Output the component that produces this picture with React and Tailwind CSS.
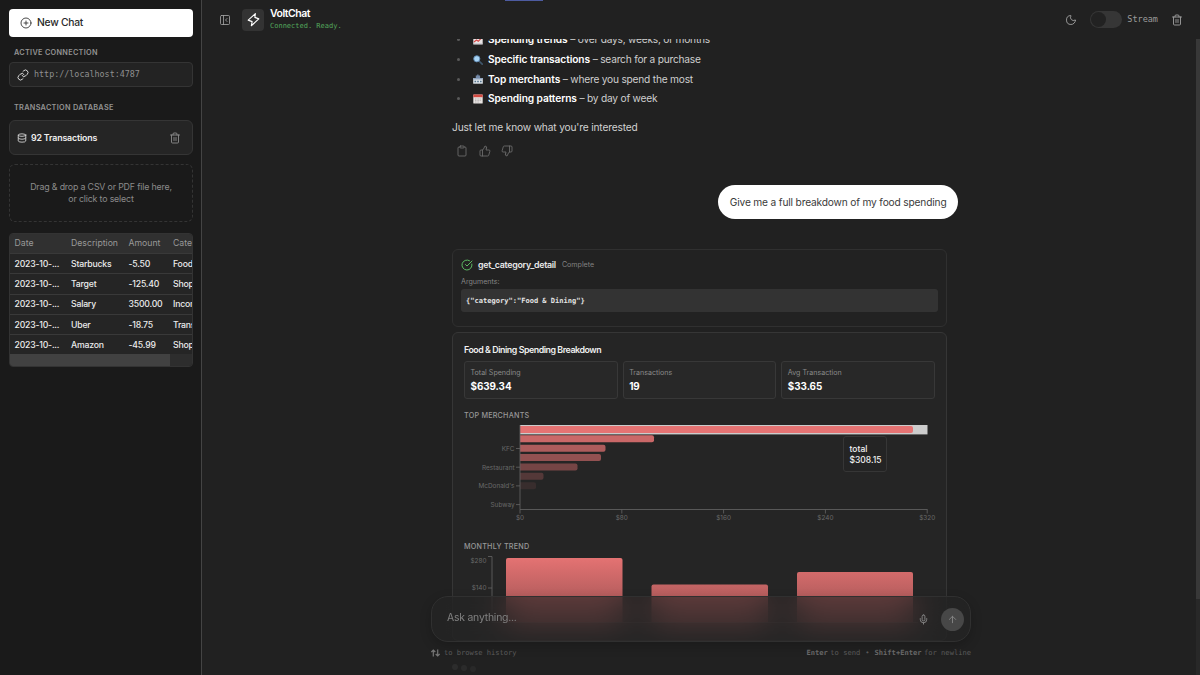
// VoltChat: sidebar with the transaction database, chat thread with tool output and charts.

import {
    ArrowUp,
    CircleCheckBig,
    CirclePlus,
    Clipboard,
    Database,
    Link,
    Mic,
    Moon,
    PanelLeftClose,
    ThumbsDown,
    ThumbsUp,
    Trash2,
} from 'lucide-react';

const ROWS = [
    ['2023-10-...', 'Starbucks', '-5.50', 'Food'],
    ['2023-10-...', 'Target', '-125.40', 'Shopping'],
    ['2023-10-...', 'Salary', '3500.00', 'Income'],
    ['2023-10-...', 'Uber', '-18.75', 'Transport'],
    ['2023-10-...', 'Amazon', '-45.99', 'Shopping'],
];

const STATS = [
    { label: 'Total Spending', value: '$639.34' },
    { label: 'Transactions', value: '19' },
    { label: 'Avg Transaction', value: '$33.65' },
];

const MERCHANTS = [
    { width: 393, opacity: 1 },
    { width: 134, opacity: 0.86 },
    { width: 85.5, opacity: 0.71 },
    { width: 81, opacity: 0.57 },
    { width: 57.5, opacity: 0.42 },
    { width: 23.5, opacity: 0.25 },
    { width: 16, opacity: 0.1 },
];

const MERCHANT_TICKS = ['KFC', 'Restaurant', "McDonald's", 'Subway'];
const TOTAL_TICKS = ['$0', '$80', '$160', '$240', '$320'];

const ChartEmoji = () => (
    <svg viewBox="0 0 10 10" className="h-[10px] w-[10px]">
        <rect x="0.3" y="0.5" width="9.4" height="9" fill="#e8e4e4" />
        <path d="M1 7l2.5-2 1.8 1.2L9 2.5" fill="none" stroke="#d84646" strokeWidth="1.1" />
        <path d="M0.3 8.6h9.4" stroke="#b9b9c4" strokeWidth="0.6" />
    </svg>
);

const SearchEmoji = () => (
    <svg viewBox="0 0 10 10" className="h-[10px] w-[10px]">
        <path d="M6 6l3.2 3.2" stroke="#3f566b" strokeWidth="1.7" strokeLinecap="round" />
        <circle cx="3.8" cy="3.8" r="3.1" fill="#a8d4f5" stroke="#5d86ad" strokeWidth="0.9" />
    </svg>
);

const ShopEmoji = () => (
    <svg viewBox="0 0 10 10" className="h-[10px] w-[10px]">
        <path d="M2.8 4V1.5h1.4V0.4h1.3v1.1h1.6V4z" fill="#7389a8" />
        <rect x="0.2" y="4" width="9.6" height="5.7" fill="#dfe5ea" />
        <rect x="0.2" y="4" width="9.6" height="1.5" fill="#8fa3bd" />
        <path d="M1.5 7.5h1.6M4.2 7.5h1.6M7 7.5h1.6" stroke="#55748c" strokeWidth="1.4" />
    </svg>
);

const CalendarEmoji = () => (
    <svg viewBox="0 0 10 10" className="h-[10px] w-[10px]">
        <rect x="0.3" y="0.5" width="9.4" height="9" rx="0.5" fill="#e6e2e0" />
        <rect x="0.3" y="0.5" width="9.4" height="2.7" fill="#d44b42" />
        <path d="M2 5h6M2 6.5h6M2 8h4" stroke="#a9a4a4" strokeWidth="0.7" strokeDasharray="1 0.6" />
    </svg>
);

const SUGGESTIONS = [
    { icon: ChartEmoji, title: 'Spending trends', text: 'over days, weeks, or months' },
    { icon: SearchEmoji, title: 'Specific transactions', text: 'search for a purchase' },
    { icon: ShopEmoji, title: 'Top merchants', text: 'where you spend the most' },
    { icon: CalendarEmoji, title: 'Spending patterns', text: 'by day of week' },
];

const Sidebar = () => (
    <aside className="flex h-full w-[202px] shrink-0 flex-col border-r border-[#444444] bg-[#1a1a1a] pt-[9px] pr-2 pl-[9px]">
        <button
            type="button"
            className="flex h-7 shrink-0 items-center gap-[5px] rounded bg-white px-[11px] text-[10.3px] font-medium tracking-[-0.25px] text-[#2a2a2a]"
        >
            <CirclePlus size={12} strokeWidth={1.7} />
            New Chat
        </button>

        <h2 className="mt-[11px] pl-[5px] text-[7.3px] leading-[10px] font-semibold tracking-[0.3px] text-[#939393]">
            ACTIVE CONNECTION
        </h2>
        <div className="mt-1 flex h-[25px] shrink-0 items-center gap-[5px] rounded border border-[#343434] bg-[#232323] pl-[7px]">
            <Link size={12} strokeWidth={2} className="text-[#d8d8d8]" />
            <span className="font-['DejaVu_Sans_Mono',monospace] text-[8.4px] text-[#8f8f8f]">
                http://localhost:4787
            </span>
        </div>

        <h2 className="mt-4 pl-[5px] text-[7.3px] leading-[10px] font-semibold tracking-[0.3px] text-[#939393]">
            TRANSACTION DATABASE
        </h2>
        <div className="mt-[7px] flex h-[35px] shrink-0 items-center rounded-md border border-[#353535] bg-[#252525] pr-[11px] pl-[7px]">
            <Database size={10} strokeWidth={2} className="text-[#dedede]" />
            <span className="ml-1 text-[8.8px] font-semibold tracking-[-0.15px] text-[#efefef]">92 Transactions</span>
            <Trash2 size={12} strokeWidth={1.8} className="ml-auto text-[#8d8d8d]" />
        </div>

        <div className="mt-[9px] flex h-[58px] shrink-0 items-center justify-center rounded-md border border-dashed border-[#343434] pb-px text-center text-[8.8px] leading-[11.5px] tracking-[-0.16px] text-[#8b8b8b]">
            <span>
                Drag &amp; drop a CSV or PDF file here,
                <br />
                or click to select
            </span>
        </div>

        <div className="mt-[11px] h-[134px] shrink-0 overflow-hidden rounded border border-[#333333] bg-[#252525] text-[8.7px]">
            <div className="grid h-[19px] w-[240px] grid-cols-[56.5px_57.5px_44.5px_82px] items-center bg-[#303030] pl-[4.5px] text-[#999999]">
                <span>Date</span>
                <span>Description</span>
                <span>Amount</span>
                <span>Category</span>
            </div>
            {ROWS.map((row) => (
                <div
                    key={row[1]}
                    className="grid h-[20.3px] w-[240px] grid-cols-[56.5px_57.5px_44.5px_82px] items-center border-t border-[#393939] pt-px pl-[4.5px] font-medium tracking-[-0.2px] text-[#ececec]"
                >
                    {row.map((cell) => (
                        <span key={cell}>{cell}</span>
                    ))}
                </div>
            ))}
            <div className="h-[13px] bg-[#2d2d2d]">
                <div className="h-full w-[160px] bg-[#414141]" />
            </div>
        </div>
    </aside>
);

const Header = () => (
    <header className="flex h-[39px] shrink-0 items-center pr-[17px] pl-[17px]">
        <PanelLeftClose size={12} strokeWidth={1.7} className="text-[#a0a0a0]" />
        <div className="ml-[11px] flex h-[22px] w-[22px] items-center justify-center rounded bg-[#333333]">
            <svg viewBox="0 0 24 24" className="h-[15px] w-[15px]">
                <path
                    d="M15 2.500 3.500 13l6.300 2.400L8.500 22 20.500 11l-6.300-2.400Z"
                    fill="none"
                    stroke="#ffffff"
                    strokeWidth="1.8"
                    strokeLinejoin="round"
                />
            </svg>
        </div>
        <div className="mt-px ml-1.5 flex flex-col">
            <span className="text-[10.5px] leading-3 font-semibold tracking-[-0.5px] text-white">VoltChat</span>
            <span className="font-['DejaVu_Sans_Mono',monospace] text-[7px] leading-3 text-[#53a85c]">
                Connected. Ready.
            </span>
        </div>
        <Moon size={12} strokeWidth={1.8} className="ml-auto text-[#a0a0a0]" />
        <div className="ml-[13px] h-[17px] w-[32px] rounded-full bg-[#363636] p-px">
            <div className="h-[15px] w-[15px] rounded-full bg-[#222222]" />
        </div>
        <span className="ml-[5px] font-['DejaVu_Sans_Mono',monospace] text-[8.5px] text-[#9c9c9c]">Stream</span>
        <Trash2 size={12} strokeWidth={1.8} className="ml-[13px] text-[#a0a0a0]" />
    </header>
);

const MerchantsChart = () => (
    <svg viewBox="464 420 472 105" className="block h-[105px] w-[472px]" fontSize="6.4" fill="#696969">
        <rect x="520" y="425" width="407.5" height="9.4" fill="#cccccc" />
        {MERCHANTS.map((m, i) => (
            <path
                key={m.width}
                d={`M520 ${426 + i * 9.37}h${m.width - 2}q2 0 2 2v3q0 2 -2 2h${2 - m.width}z`}
                fill="#e57373"
                fillOpacity={m.opacity}
            />
        ))}
        <path d="M520 425v84.5h407.5" fill="none" stroke="#666666" strokeWidth="0.8" />
        {MERCHANT_TICKS.map((label, i) => (
            <g key={label}>
                <path d={`M516 ${448.5 + i * 18.7}h4`} stroke="#666666" strokeWidth="0.8" />
                <text x="514.5" y={450.8 + i * 18.7} textAnchor="end">
                    {label}
                </text>
            </g>
        ))}
        {TOTAL_TICKS.map((label, i) => (
            <g key={label}>
                <path d={`M${520 + i * 101.8} 509.5v4`} stroke="#666666" strokeWidth="0.8" />
                <text x={520 + i * 101.8} y="519.5" textAnchor="middle">
                    {label}
                </text>
            </g>
        ))}
    </svg>
);

const TrendChart = () => (
    <svg viewBox="464 552 472 76" className="block h-[76px] w-[472px]" fontSize="6.4" fill="#696969">
        <defs>
            <linearGradient id="trend" gradientUnits="userSpaceOnUse" x1="0" y1="557" x2="0" y2="624">
                <stop offset="0" stopColor="#e57373" />
                <stop offset="1" stopColor="#964f4f" />
            </linearGradient>
        </defs>
        <path d="M488 556.5h4v66h426" fill="none" stroke="#666666" strokeWidth="0.8" />
        <path d="M488 588h4" stroke="#666666" strokeWidth="0.8" />
        <text x="486.5" y="563.3" textAnchor="end">$280</text>
        <text x="486.5" y="590.3" textAnchor="end">$140</text>
        <path d="M506 622v-62q0-2 2-2h112.500q2 0 2 2v62z" fill="url(#trend)" />
        <path d="M651.500 622v-35.500q0-2 2-2h112.500q2 0 2 2v35.500z" fill="url(#trend)" />
        <path d="M797 622v-48q0-2 2-2h112q2 0 2 2v48z" fill="url(#trend)" />
    </svg>
);

const Thread = () => (
    <div className="min-h-0 flex-1 overflow-hidden">
        <div className="ml-[250px] flex w-[506px] flex-col">
            <ul className="-mt-[9px] text-[10.2px] tracking-[-0.22px] text-[#cfcfcf]">
                {SUGGESTIONS.map(({ icon: Icon, title, text }) => (
                    <li key={title} className="flex h-[19.7px] items-center pl-[5px]">
                        <span className="h-[3px] w-[3px] rounded-full bg-[#5a5a5a]" />
                        <span className="mr-[5px] ml-[13px]">
                            <Icon />
                        </span>
                        <span className="whitespace-pre">
                            <strong className="font-semibold tracking-[-0.1px] text-white">{title}</strong> – {text}
                        </span>
                    </li>
                ))}
            </ul>
            <p className="mt-2.5 text-[10.2px] leading-[16px] tracking-[-0.165px] text-[#d2d2d2]">
                Just let me know what you&apos;re interested
            </p>
            <div className="mt-[10.6px] flex h-3 items-center gap-[10.5px] pl-1 text-[#6e6e6e]">
                <Clipboard size={12} strokeWidth={1.7} />
                <ThumbsUp size={12} strokeWidth={1.7} />
                <ThumbsDown size={12} strokeWidth={1.7} />
            </div>

            <div className="mt-7 flex h-[34px] shrink-0 items-center self-end rounded-full bg-white px-[11.5px] text-[10.2px] tracking-[-0.17px] text-[#3a3a3a]">
                Give me a full breakdown of my food spending
            </div>

            <section className="mt-[30px] h-[78px] w-[495px] shrink-0 rounded-md border border-[#303030] bg-[#222222] px-2 pt-2">
                <div className="flex h-[13px] items-center">
                    <CircleCheckBig size={12} strokeWidth={2} className="text-[#5dba63]" />
                    <span className="ml-[5px] text-[8.8px] leading-[13px] font-semibold tracking-[-0.27px] text-[#e8e8e8]">
                        get_category_detail
                    </span>
                    <span className="ml-1.5 text-[7.1px] leading-[13px] text-[#818181]">Complete</span>
                </div>
                <div className="mt-1.5 text-[7.1px] leading-[10px] text-[#858585]">Arguments:</div>
                <pre className="mt-0.5 flex h-[23px] items-center rounded-[3px] bg-[#333333] pl-[5px] font-['DejaVu_Sans_Mono',monospace] text-[7.05px] font-bold text-[#e4e4e4]">
                    {'{"category":"Food & Dining"}'}
                </pre>
            </section>

            <section className="mt-[5px] h-[309px] w-[495px] shrink-0 rounded-md border border-[#363636] bg-[#252525] pt-[11px] pl-[11px]">
                <h3 className="text-[8.8px] leading-3 font-semibold tracking-[-0.44px] text-[#f0f0f0]">
                    Food &amp; Dining Spending Breakdown
                </h3>
                <div className="mt-[5px] grid w-[471px] grid-cols-3 gap-[5px]">
                    {STATS.map((s) => (
                        <div key={s.label} className="h-[38px] rounded-[3px] border border-[#383838] bg-[#282828] px-[5.5px] pt-[5px]">
                            <div className="text-[7.1px] leading-[11px] text-[#8a8a8a]">{s.label}</div>
                            <div className="mt-px text-[9.9px] leading-[14px] font-bold tracking-[-0.07px] text-white">
                                {s.value}
                            </div>
                        </div>
                    ))}
                </div>
                <h4 className="mt-3 text-[7.2px] leading-[10px] font-medium tracking-[0.22px] text-[#989898]">
                    TOP MERCHANTS
                </h4>
                <div className="relative -mt-px">
                    <MerchantsChart />
                    <div className="absolute top-[16px] left-[379px] flex h-[36px] w-[44px] flex-col justify-center rounded-[3px] border border-[#363636] bg-[#242424] pt-0.5 pl-[5.5px] text-[8.5px] leading-[11px] font-medium text-[#f2f2f2]">
                        <span>total</span>
                        <span>$308.15</span>
                    </div>
                </div>
                <h4 className="mt-[17px] text-[7.2px] leading-[10px] font-medium tracking-[0.22px] text-[#989898]">
                    MONTHLY TREND
                </h4>
                <TrendChart />
            </section>
        </div>
    </div>
);

const Composer = () => (
    <div className="absolute bottom-0 left-[229px] w-[540px]">
        <div className="flex h-[46px] items-center rounded-[17px] border border-[#303030] bg-[#242424]/60 pr-[6px] pl-[15px] shadow-[0_4px_12px_rgba(0,0,0,0.2)] backdrop-blur-[16px]">
            <span className="-mt-0.5 text-[10.4px] tracking-[-0.2px] text-[#818181]">Ask anything...</span>
            <Mic size={11} strokeWidth={2} className="ml-auto text-[#8b8b8b]" />
            <div className="ml-3 flex h-[23px] w-[23px] items-center justify-center rounded-full bg-[#474747]">
                <ArrowUp size={11} strokeWidth={2} className="text-[#858585]" />
            </div>
        </div>
        <div className="mt-1.5 flex h-[10px] items-center justify-between font-['DejaVu_Sans_Mono',monospace] text-[7.1px] text-[#5c5c5c]">
            <span className="flex items-center gap-1">
                <svg viewBox="0 0 9 8" className="h-2 w-[9px]" fill="none" stroke="#777777" strokeWidth="1.2">
                    <path d="M2.300 7.500V1M0.300 3l2-2 2 2M6.700 0.500V7M4.700 5l2 2 2-2" />
                </svg>
                to browse history
            </span>
            <span className="flex gap-[2.5px]">
                <b className="text-[#6a6a6a]">Enter</b>
                <span>to send</span>
                <span className="mx-[2.5px]">•</span>
                <b className="text-[#6a6a6a]">Shift+Enter</b>
                <span>for newline</span>
            </span>
        </div>
        <div className="mt-1 flex h-[13px] gap-[3px] pt-[2px] pl-[21px]">
            <span className="h-1.5 w-1.5 rounded-full bg-[#2c2c2c]" />
            <span className="mt-px h-1.5 w-1.5 rounded-full bg-[#2b2b2b]" />
            <span className="mt-0.5 h-1.5 w-1.5 rounded-full bg-[#292929]" />
        </div>
    </div>
);

const App = () => (
    <div className="flex h-[675px] w-full overflow-hidden bg-[#212121] font-['Inter',sans-serif]">
        <Sidebar />
        <main className="relative flex min-w-0 flex-1 flex-col">
            <div className="absolute top-0 left-[303px] h-px w-[38px] bg-[#4d5ba0]" />
            <Header />
            <Thread />
            <Composer />
            <div className="absolute top-[39px] right-0 bottom-0 w-[4px] bg-[#282828]">
                <div className="h-[560px] bg-[#383838]" />
            </div>
        </main>
    </div>
);

export default App;
